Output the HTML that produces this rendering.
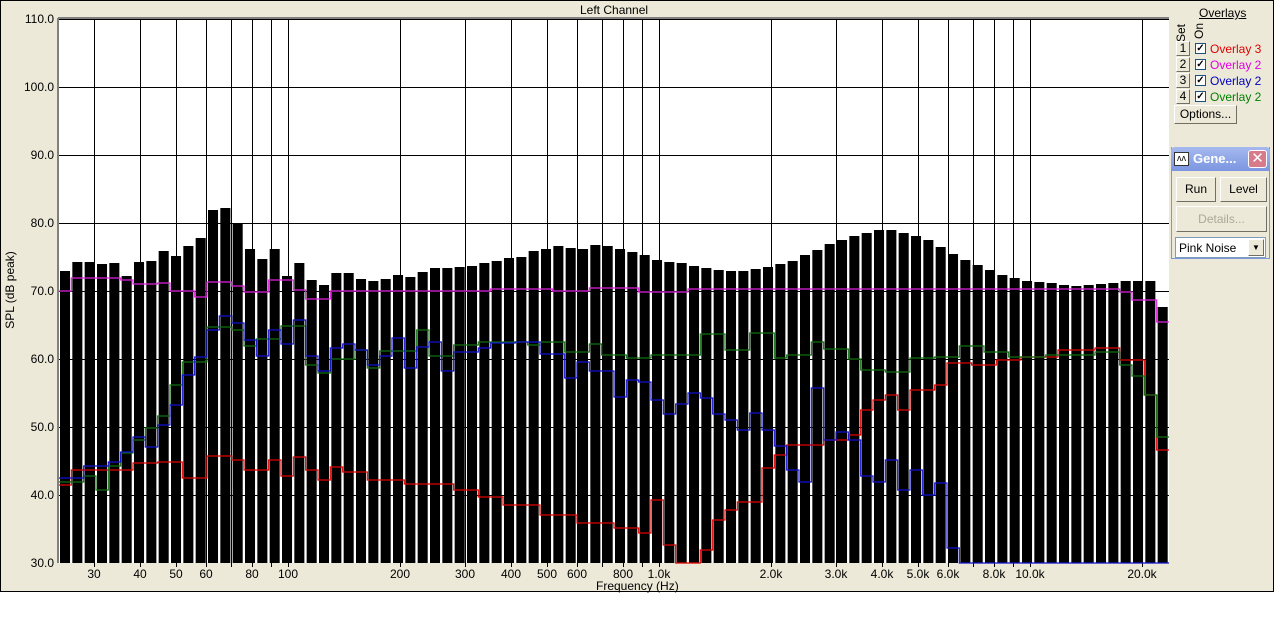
<!DOCTYPE html>
<html><head><meta charset="utf-8">
<style>
body{margin:0;width:1274px;height:637px;background:#fff;position:relative;overflow:hidden;font-family:"Liberation Sans",sans-serif;font-size:12px;color:#000}
#frame{position:absolute;left:0;top:0;width:1272px;height:590px;border:1px solid #000;background:#ece9d8}
.t{position:absolute;white-space:nowrap}
.yl{position:absolute;width:50px;text-align:right;left:4px}
.xl{position:absolute;transform:translateX(-50%);top:567px}
.btn{position:absolute;background:#ece9d8;border:1px solid;border-color:#fff #716f64 #716f64 #fff;box-sizing:border-box;text-align:center}
.cb{position:absolute;width:11px;height:11px;border:1px solid #1c5180;background:#fff;box-sizing:border-box;font-size:10px;line-height:9px;text-align:center;font-weight:bold}
</style></head><body>
<div id="frame"></div>
<div class="t" style="left:580px;top:3px">Left Channel</div>
<div class="t" style="left:596px;top:579px">Frequency (Hz)</div>
<div class="t" style="left:-29px;top:283px;transform:rotate(-90deg)">SPL (dB peak)</div>
<div class="yl" style="top:12px">110.0</div>
<div class="yl" style="top:80px">100.0</div>
<div class="yl" style="top:148px">90.0</div>
<div class="yl" style="top:216px">80.0</div>
<div class="yl" style="top:284px">70.0</div>
<div class="yl" style="top:352px">60.0</div>
<div class="yl" style="top:420px">50.0</div>
<div class="yl" style="top:488px">40.0</div>
<div class="yl" style="top:556px">30.0</div>
<div id="xls"></div>
<svg id="plot" style="position:absolute;left:0;top:0" width="1274" height="637"></svg>

<div class="t" style="left:1199px;top:6px;text-decoration:underline">Overlays</div>
<div class="t" style="left:1172px;top:26px;transform:rotate(-90deg);font-size:12px">Set</div>
<div class="t" style="left:1191px;top:24px;transform:rotate(-90deg);font-size:12px">On</div>
<div class="btn" style="left:1176px;top:41px;width:14px;height:15px;line-height:13px">1</div>
<div class="btn" style="left:1176px;top:57px;width:14px;height:15px;line-height:13px">2</div>
<div class="btn" style="left:1176px;top:73px;width:14px;height:15px;line-height:13px">3</div>
<div class="btn" style="left:1176px;top:89px;width:14px;height:15px;line-height:13px">4</div>
<div class="cb" style="left:1195px;top:43px">✓</div>
<div class="cb" style="left:1195px;top:59px">✓</div>
<div class="cb" style="left:1195px;top:75px">✓</div>
<div class="cb" style="left:1195px;top:91px">✓</div>
<div class="t" style="left:1210px;top:42px;color:#e00000">Overlay 3</div>
<div class="t" style="left:1210px;top:58px;color:#e000e0">Overlay 2</div>
<div class="t" style="left:1210px;top:74px;color:#0000c0">Overlay 2</div>
<div class="t" style="left:1210px;top:90px;color:#008000">Overlay 2</div>
<div class="btn" style="left:1174px;top:105px;width:63px;height:19px;line-height:17px">Options...</div>

<div style="position:absolute;left:1171px;top:147px;width:99px;height:112px;background:#ece9d8;border:1px solid #7a96df;border-top:none;box-sizing:border-box">
<div style="position:absolute;left:-1px;top:0;width:99px;height:24px;background:linear-gradient(#a6b9ef,#7b96e0);border-radius:4px 4px 0 0"></div>
<div style="position:absolute;left:2px;top:5px;width:15px;height:14px;background:#fff;border:1px solid #333;box-sizing:border-box;font-size:9px;line-height:11px;text-align:center">ᴧᴧ</div>
<div class="t" style="left:21px;top:4px;color:#fff;font-weight:bold;font-size:13px">Gene...</div>
<div style="position:absolute;left:76px;top:3px;width:19px;height:18px;background:#d77a8a;border:1px solid #fff;border-radius:3px;box-sizing:border-box;color:#fff;text-align:center;line-height:16px;font-size:15px">✕</div>
</div>
<div class="btn" style="left:1176px;top:177px;width:40px;height:25px;line-height:23px">Run</div>
<div class="btn" style="left:1220px;top:177px;width:47px;height:25px;line-height:23px">Level</div>
<div class="btn" style="left:1176px;top:206px;width:91px;height:26px;line-height:24px;color:#aca899">Details...</div>
<div style="position:absolute;left:1175px;top:237px;width:91px;height:21px;background:#fff;border:1px solid #7f9db9;box-sizing:border-box"><span style="position:absolute;left:3px;top:3px">Pink Noise</span><div class="btn" style="right:1px;top:1px;width:16px;height:17px;font-size:8px;line-height:15px">▼</div></div>

<script>
var NS="http://www.w3.org/2000/svg",svg=document.getElementById('plot');
function el(t,a){var e=document.createElementNS(NS,t);for(var k in a)e.setAttribute(k,a[k]);svg.appendChild(e);return e;}
var L=59,R=1169,T=19,B=563;
function fx(f){return 94+371*Math.log10(f/30);}
el('rect',{x:L,y:T,width:R-L,height:B-T,fill:'#fff'});
var grid=[30,40,50,60,70,80,90,100,200,300,400,500,600,700,800,900,1000,2000,3000,4000,5000,6000,7000,8000,9000,10000,20000];
grid.forEach(function(f){var x=Math.round(fx(f))+.5;el('line',{x1:x,y1:T,x2:x,y2:B,stroke:'#000','stroke-width':1});el('line',{x1:x,y1:B,x2:x,y2:B+4,stroke:'#000'});});
for(var d=0;d<8;d++){var y=T+d*68+.5;el('line',{x1:L,y1:y,x2:R,y2:y,stroke:'#000'});}
var tops=[271,262,262,264,263,276,262,261,251,256,246,238,210,208,223,249,259,249,276,263,280,285,273,273,279,281,279,275,277,272,268,268,267,266,263,261,258,257,251,249,246,248,249,245,246,249,252,255,260,262,263,266,268,270,271,271,269,267,264,261,255,250,244,240,236,233,230,230,233,236,240,247,254,260,265,270,275,278,281,282,283,285,286,285,284,283,281,281,281,307];
var N=tops.length,W=(R-L)/N;
for(var i=0;i<N;i++){var x=L+i*W;el('rect',{x:x+1,y:tops[i],width:W-2.3,height:B-tops[i],fill:'#000'});}
function series(pts){var out=[];for(var i=0;i<N;i++){var cx=L+(i+.5)*W,y=pts[0][1];for(var j=0;j<pts.length;j++){if(pts[j][0]<=cx+6)y=pts[j][1];}out.push(y);}return out;}
function draw(vals,col){var d='M'+L+' '+vals[0];for(var i=0;i<N;i++){var x0=L+i*W,x1=x0+W;d+=' L'+x0.toFixed(1)+' '+vals[i]+' L'+x1.toFixed(1)+' '+vals[i];}el('path',{d:d,fill:'none',stroke:col,'stroke-width':1.2});}
var mag=[[59,291],[72,278],[127,280],[140,284],[164,283],[177,291],[189,291],[201,297],[213,282],[238,286],[250,292],[275,280],[300,290],[312,299],[337,291],[500,289],[560,291],[600,288],[650,292],[700,289],[1100,289],[1126,292],[1140,300],[1157,322]];
var blu=[[59,478],[90,466],[115,462],[127,452],[140,437],[152,447],[160,425],[172,405],[185,375],[197,357],[210,330],[222,316],[234,323],[247,340],[259,356],[271,330],[284,344],[296,320],[308,356],[321,371],[333,348],[346,344],[358,350],[370,365],[383,356],[395,338],[407,368],[420,347],[432,342],[444,371],[456,352],[481,348],[494,343],[519,342],[543,354],[568,378],[580,362],[592,371],[617,397],[629,380],[641,382],[654,400],[666,414],[678,404],[691,393],[703,398],[715,414],[728,420],[740,430],[752,413],[765,430],[777,446],[789,470],[802,482],[814,388],[826,440],[839,432],[851,440],[863,476],[876,482],[888,460],[900,490],[913,470],[925,495],[937,483],[950,548],[962,563]];
var grn=[[59,482],[90,476],[103,490],[115,466],[127,453],[140,440],[152,428],[164,416],[176,385],[189,362],[208,327],[238,330],[250,346],[263,339],[284,326],[308,365],[321,373],[336,359],[358,350],[370,368],[383,351],[420,330],[432,356],[456,345],[481,342],[506,342],[531,345],[543,342],[568,352],[592,344],[605,355],[629,358],[654,355],[678,355],[703,334],[728,350],[752,333],[777,358],[796,355],[814,342],[826,349],[851,359],[866,370],[888,372],[913,358],[937,357],[962,346],[987,352],[1011,357],[1048,355],[1097,352],[1122,365],[1134,376],[1146,395],[1158,437]];
var red=[[59,485],[72,470],[136,463],[160,462],[185,478],[208,456],[234,460],[247,470],[271,460],[284,476],[296,457],[308,470],[321,480],[333,467],[346,472],[370,480],[407,484],[456,490],[481,497],[506,505],[543,515],[580,523],[617,528],[641,533],[654,500],[666,545],[678,563],[703,563],[710,550],[715,520],[728,510],[745,502],[765,468],[777,455],[796,445],[826,440],[851,435],[863,410],[876,400],[888,395],[900,410],[913,390],[937,385],[950,363],[975,365],[999,360],[1024,357],[1060,350],[1097,348],[1122,360],[1146,395],[1158,450]];
draw(series(red),'#e00000');draw(series(grn),'#107010');draw(series(blu),'#1010d0');draw(series(mag),'#e020e0');
el('line',{x1:L-1,y1:T-1,x2:R,y2:T-1,stroke:'#808080','stroke-width':2});
el('line',{x1:L-1,y1:T-1,x2:L-1,y2:B,stroke:'#808080','stroke-width':2});
var labs=[[30,'30'],[40,'40'],[50,'50'],[60,'60'],[80,'80'],[100,'100'],[200,'200'],[300,'300'],[400,'400'],[500,'500'],[600,'600'],[800,'800'],[1000,'1.0k'],[2000,'2.0k'],[3000,'3.0k'],[4000,'4.0k'],[5000,'5.0k'],[6000,'6.0k'],[8000,'8.0k'],[10000,'10.0k'],[20000,'20.0k']];
var h='';labs.forEach(function(l){h+='<div class="xl" style="left:'+Math.round(fx(l[0]))+'px">'+l[1]+'</div>';});
document.getElementById('xls').innerHTML=h;
</script>
</body></html>
